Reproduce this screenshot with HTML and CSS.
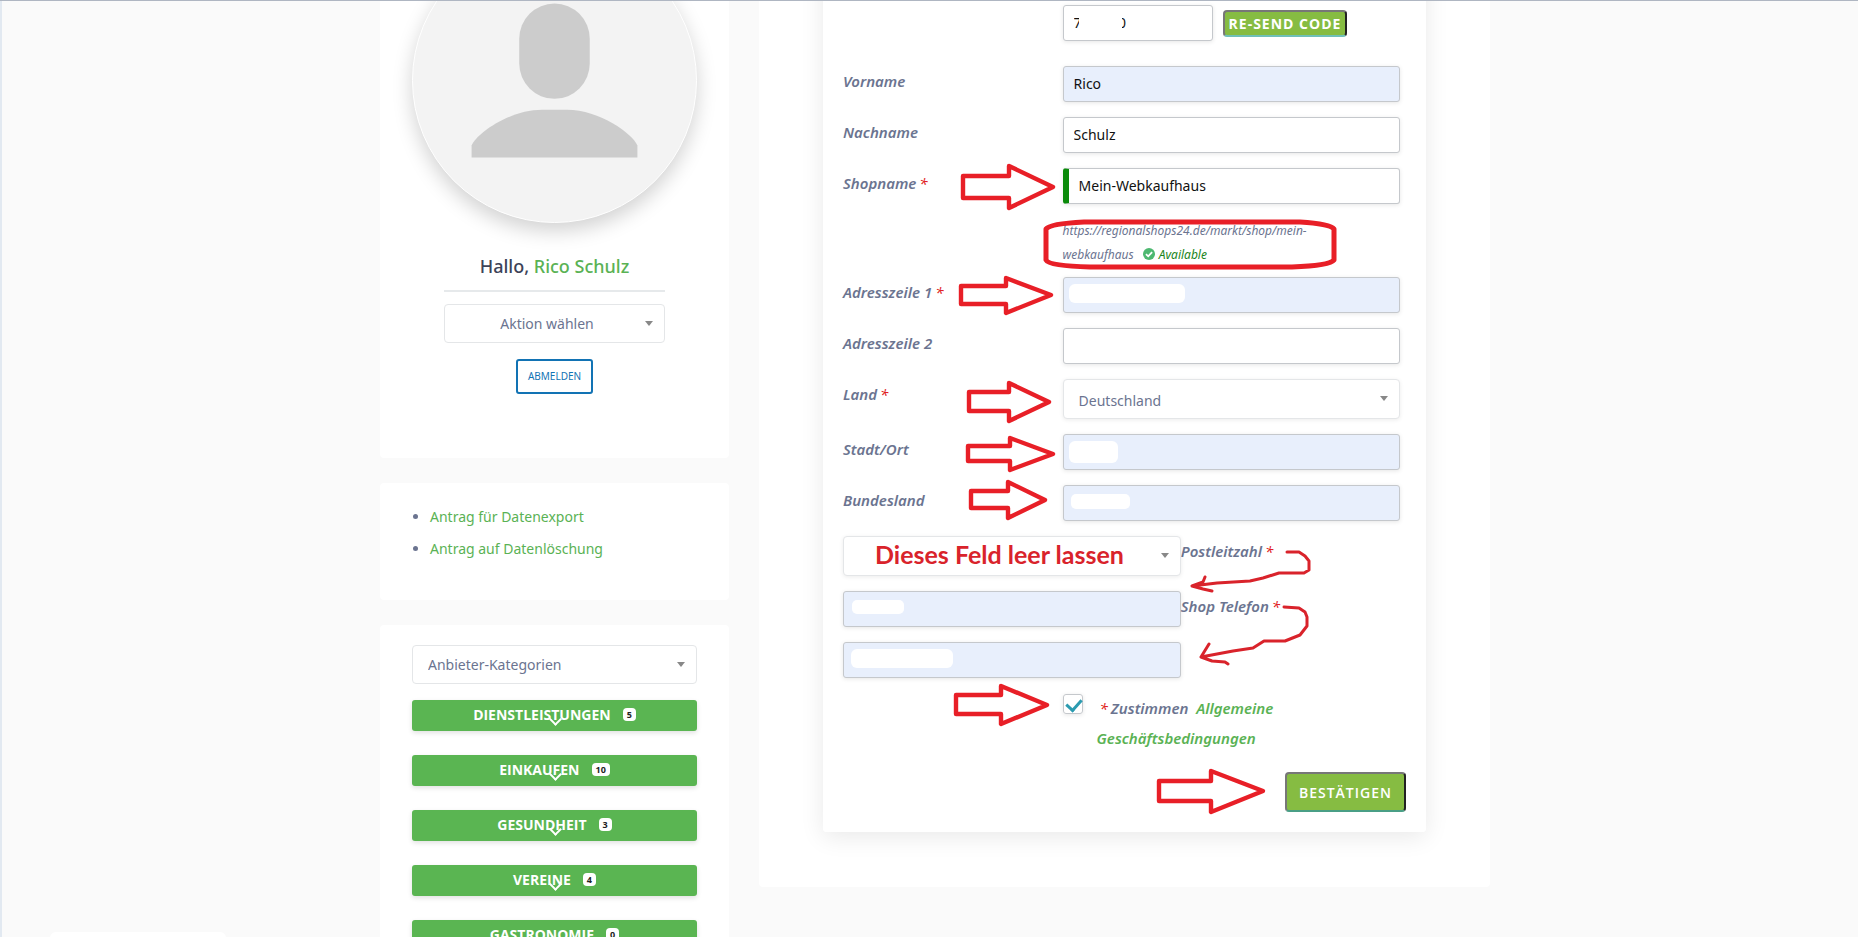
FILE: index.html
```html
<!DOCTYPE html>
<html lang="de">
<head>
    <meta charset="UTF-8">
    <meta name="viewport" content="width=device-width, initial-scale=1.0">
    <title>Anbieter werden</title>
    <link rel="stylesheet" href="styles.css">
</head>
<body>
    <div class="page">
        <aside class="sidebar">
            <section class="card profile">
                <div class="avatar">
                    <svg viewBox="0 0 285 285" aria-hidden="true">
                        <rect x="107" y="65" width="71" height="96" rx="35.5" fill="#ccc"/>
                        <path d="M59 220V208C64 196 97 172 130 172H155C188 172 221 196 226 208V220Z" fill="#ccc"/>
                    </svg>
                </div>
                <div class="profile-body">
                    <h2>Hallo, <a href="#">Rico Schulz</a></h2>
                    <div class="select-wrap">
                        <select class="action" aria-label="Aktion">
                            <option>Aktion wählen</option>
                        </select>
                    </div>
                    <a class="logout" href="#">ABMELDEN</a>
                </div>
            </section>

            <section class="card privacy">
                <ul>
                    <li><a href="#">Antrag für Datenexport</a></li>
                    <li><a href="#">Antrag auf Datenlöschung</a></li>
                </ul>
            </section>

            <section class="card categories">
                <div class="select-wrap">
                    <select aria-label="Kategorien">
                        <option>Anbieter-Kategorien</option>
                    </select>
                </div>
                <button type="button" class="category">DIENSTLEISTUNGEN <span class="badge">5</span></button>
                <button type="button" class="category">EINKAUFEN <span class="badge">10</span></button>
                <button type="button" class="category">GESUNDHEIT <span class="badge">3</span></button>
                <button type="button" class="category">VEREINE <span class="badge">4</span></button>
                <button type="button" class="category">GASTRONOMIE <span class="badge">0</span></button>
            </section>
        </aside>

        <main class="card content">
            <form class="vendor-form">
                <div class="row code-row">
                    <div class="field code">
                        <input type="text" aria-label="Code" value="7&nbsp;&nbsp;&nbsp;&nbsp;&nbsp;&nbsp;&nbsp;&nbsp;&nbsp;&nbsp;0">
                        <button type="button" class="btn resend">RE-SEND CODE</button>
                    </div>
                </div>
                <div class="row">
                    <label for="vorname">Vorname</label>
                    <input class="field filled" type="text" id="vorname" value="Rico">
                </div>
                <div class="row">
                    <label for="nachname">Nachname</label>
                    <input class="field" type="text" id="nachname" value="Schulz">
                </div>
                <div class="row">
                    <label for="shopname">Shopname<span class="req">*</span></label>
                    <input class="field valid" type="text" id="shopname" value="Mein-Webkaufhaus">
                </div>
                <div class="row hint-row">
                    <p class="field hint">https://regionalshops24.de/markt/shop/mein-webkaufhaus
                        <span class="available"><svg viewBox="0 0 12 12" aria-hidden="true"><circle cx="6" cy="6" r="6" fill="#4db870"/><path d="M3 6.2L5.2 8.3L9.1 4.1" fill="none" stroke="#fff" stroke-width="1.8"/></svg>Available</span>
                    </p>
                </div>
                <div class="row">
                    <label for="adresse1">Adresszeile 1<span class="req">*</span></label>
                    <input class="field filled" type="text" id="adresse1">
                </div>
                <div class="row">
                    <label for="adresse2">Adresszeile 2</label>
                    <input class="field" type="text" id="adresse2">
                </div>
                <div class="row">
                    <label for="land">Land<span class="req">*</span></label>
                    <div class="field select-wrap">
                        <select id="land">
                            <option>Deutschland</option>
                        </select>
                    </div>
                </div>
                <div class="row">
                    <label for="ort">Stadt/Ort</label>
                    <input class="field filled" type="text" id="ort">
                </div>
                <div class="row">
                    <label for="bundesland">Bundesland</label>
                    <input class="field filled" type="text" id="bundesland">
                </div>
                <div class="row flipped">
                    <div class="select-wrap">
                        <select aria-label="Region">
                            <option></option>
                        </select>
                    </div>
                    <label for="plz">Postleitzahl<span class="req">*</span></label>
                </div>
                <div class="row flipped">
                    <input class="filled" type="text" id="plz">
                    <label for="telefon">Shop Telefon<span class="req">*</span></label>
                </div>
                <div class="row flipped">
                    <input class="filled" type="text" id="telefon">
                </div>
                <div class="row">
                    <div class="field agree">
                        <input type="checkbox" id="agb" checked>
                        <label for="agb"><span class="req">*</span>Zustimmen&nbsp; <a href="#">Allgemeine Geschäftsbedingungen</a></label>
                    </div>
                </div>
                <div class="actions">
                    <button type="submit" class="btn">BESTÄTIGEN</button>
                </div>

                <svg class="notes" viewBox="823 -30 603 862">
                    <g fill="#fff">
                        <rect x="1079" y="14" width="43" height="18"/>
                        <rect x="1069" y="284" width="116" height="19" rx="6"/>
                        <rect x="1069" y="441" width="49" height="22" rx="6"/>
                        <rect x="1071" y="494" width="59" height="15" rx="5"/>
                        <rect x="852" y="600" width="52" height="14" rx="5"/>
                        <rect x="851" y="649" width="102" height="19" rx="6"/>
                    </g>
                    <g fill="none" stroke="#e81f27" stroke-width="4.4" stroke-linejoin="round" stroke-linecap="round">
                        <path d="M963 176H1009V166L1053 187L1009 208V198H963Z"/>
                        <path d="M961 286H1006V278L1051 295L1006 313V304H961Z"/>
                        <path d="M969 392H1009V383L1049 402L1009 421V411H969Z"/>
                        <path d="M968 446H1010V438L1053 454L1010 470V461H968Z"/>
                        <path d="M971 491H1008V482L1045 500L1008 518V508H971Z"/>
                        <path d="M956 695H1001V686L1047 705L1001 724V714H956Z"/>
                        <path d="M1159 781H1211V771L1263 791L1211 812V801H1159Z"/>
                        <path stroke-width="5" d="M1046 229V260C1048 264 1063 266 1090 267H1292C1318 266 1331 264 1334 260V229C1331 225 1316 223 1300 222H1084C1063 223 1049 225 1046 229Z"/>
                    </g>
                    <g fill="none" stroke="#d9232b" stroke-width="3" stroke-linejoin="round" stroke-linecap="round">
                        <path d="M1287 552H1299L1305 556L1309 561V570L1304 573H1279L1263 578L1250 581L1217 583L1192 586M1205 577L1203 582L1192 586L1203 589L1212 591"/>
                        <path d="M1284 607L1299 608L1305 612L1307 617V626L1300 635L1285 641H1264L1253 648L1233 651L1201 657M1209 644L1201 657L1212 661L1225 662L1228 664"/>
                    </g>
                    <text class="note-text" x="875" y="564">Dieses Feld leer lassen</text>
                </svg>
            </form>
        </main>
    </div>
    <div class="toast"></div>
</body>
</html>
```
FILE: styles.css
```css
* {
    margin: 0;
    padding: 0;
    box-sizing: border-box;
}

body {
    font-family: 'Noto Sans', 'Open Sans', sans-serif;
    font-size: 14px;
    color: #6b7490;
    background: #fafafa;
    height: 100vh;
    overflow: hidden;
    padding-left: 10px;
    border-left: 2px solid #e2e9f1;
}

body::before {
    content: '';
    position: fixed;
    top: 0;
    left: 0;
    right: 0;
    height: 1px;
    background: #afb6c2;
    z-index: 5;
}

a {
    color: #5ab254;
    text-decoration: none;
}

/* page is scrolled down a bit */
.page {
    max-width: 1110px;
    margin: -94px auto 0;
    display: grid;
    grid-template-columns: 349px 1fr;
    gap: 30px;
    align-items: start;
}

.sidebar {
    display: flex;
    flex-direction: column;
    gap: 25px;
}

.card {
    background: #fff;
    border-radius: 4px;
}

/* Sidebar */
.profile {
    padding: 32px 32px 64px;
    text-align: center;
}

.avatar {
    border-radius: 50%;
    background: #f3f3f3;
    border: 1px solid #fff;
    box-shadow: 0 8px 20px rgba(0, 0, 0, 0.18);
    overflow: hidden;
}

.avatar svg {
    display: block;
    width: 100%;
}

.profile-body {
    padding: 23px 32px 0;
}

h2 {
    font-size: 18px;
    font-weight: 500;
    line-height: 40px;
    color: #3d4358;
    padding-bottom: 4px;
    margin-bottom: 12px;
    border-bottom: 2px solid #e6e9eb;
}

.select-wrap {
    position: relative;
}

.select-wrap::after {
    content: '';
    position: absolute;
    right: 12px;
    top: 17px;
    border: 4px solid transparent;
    border-top: 5px solid #888;
    border-bottom: 0;
    pointer-events: none;
}

select {
    display: block;
    width: 100%;
    height: 39px;
    padding: 0 15px;
    appearance: none;
    font: inherit;
    color: #6b7490;
    background: #fff;
    border: 1px solid #e4e6e8;
    border-radius: 4px;
}

select.action {
    padding-right: 30px;
    text-align: center;
    text-align-last: center;
}

.logout {
    display: inline-block;
    margin-top: 16px;
    padding: 0 10px;
    border: 2px solid #1273b4;
    border-radius: 3px;
    font-size: 10px;
    line-height: 31px;
    color: #1273b4;
}

.privacy {
    padding: 18px 32px 35px;
}

.privacy ul {
    padding-left: 18px;
    line-height: 32px;
}

.categories {
    padding: 20px 32px;
}

.category {
    display: flex;
    justify-content: center;
    align-items: center;
    gap: 12px;
    position: relative;
    width: 100%;
    height: 31px;
    margin-bottom: 24px;
    padding-bottom: 2px;
    border: 0;
    border-radius: 3px;
    background: #5ab552;
    box-shadow: 0 2px 5px rgba(0, 0, 0, 0.12);
    color: #fff;
    font: bold 14px 'Open Sans', sans-serif;
}

.categories .select-wrap {
    margin-bottom: 16px;
}

.category::after {
    content: '';
    position: absolute;
    left: 50%;
    top: 15px;
    width: 7px;
    height: 7px;
    margin-left: -4px;
    border: solid #fff;
    border-width: 0 2px 2px 0;
    transform: rotate(45deg);
}

.badge {
    padding: 0 4px;
    border-radius: 4px;
    background: #fff;
    color: #222;
    font-size: 9px;
    line-height: 13px;
}

/* Vendor form */
.content {
    padding: 64px 64px 55px;
}

.vendor-form {
    position: relative;
    padding: 35px 20px 20px;
    background: #fff;
    border-radius: 3px;
    box-shadow: 0 5px 25px rgba(0, 0, 0, 0.09);
}

.row {
    display: grid;
    grid-template-columns: 39fr 60fr 1fr;
    align-items: start;
    margin-bottom: 15px;
}

.row .field {
    grid-column: 2;
}

.row.flipped {
    grid-template-columns: 60fr 40fr;
}

.code-row {
    margin-bottom: 25px;
}

.hint-row {
    margin-bottom: 10px;
}

label {
    font-size: 15px;
    font-weight: 600;
    font-style: italic;
    line-height: 30px;
}

.req {
    margin: 0 3px;
    color: #e02020;
    font-weight: 400;
}

input[type="text"] {
    width: 100%;
    height: 36px;
    padding: 0 10px 2px;
    font: inherit;
    color: #111;
    background: #fff;
    border: 1px solid #c5c8cc;
    border-radius: 3px;
    box-shadow: 0 1px 4px rgba(0, 0, 0, 0.1);
}

input[type="text"].filled {
    background: #e8effc;
}

input[type="text"].valid {
    border-left: 6px solid #0a8a0a;
}

.code {
    display: flex;
    align-items: center;
    gap: 10px;
}

.code input[type="text"] {
    width: 150px;
}

.vendor-form select {
    height: 40px;
    padding-top: 2px;
    box-shadow: 0 1px 4px rgba(0, 0, 0, 0.08);
}

.btn {
    height: 40px;
    padding: 0 12px;
    background: #86bc42;
    border: 2px solid;
    border-color: #777 #222 #4a9f86 #777;
    border-radius: 4px;
    color: #fff;
    font: 600 14px 'Open Sans', sans-serif;
    letter-spacing: 1px;
}

.btn.resend {
    height: 27px;
    padding: 0 4px;
    border-bottom-color: #6fc0b8;
    font-weight: 700;
    white-space: nowrap;
}

.hint {
    max-width: 280px;
    font-size: 12px;
    font-style: italic;
    line-height: 24px;
}

.available {
    margin-left: 6px;
    color: #1b851b;
}

.available svg {
    width: 12px;
    height: 12px;
    margin-right: 4px;
    vertical-align: -1px;
}

.agree {
    display: flex;
    align-items: flex-start;
    gap: 14px;
}

.agree label {
    max-width: 220px;
}

.agree input {
    appearance: none;
    flex: none;
    width: 20px;
    height: 20px;
    margin-top: 1px;
    border: 1px solid #c5c8cc;
    border-radius: 3px;
    box-shadow: 0 1px 4px rgba(0, 0, 0, 0.1);
}

.agree input:checked::before {
    content: '';
    display: block;
    width: 7px;
    height: 12px;
    margin: 1px 0 0 5px;
    border: solid #2b9bb0;
    border-width: 0 3px 3px 0;
    transform: rotate(42deg);
}

.actions {
    display: flex;
    justify-content: flex-end;
    margin-top: 19px;
}

.notes {
    position: absolute;
    top: 0;
    left: 0;
    width: 100%;
    height: 100%;
    pointer-events: none;
}

.note-text {
    font: bold 25px Lato, sans-serif;
    fill: #d9232b;
}

.toast {
    position: fixed;
    left: 50px;
    bottom: -35px;
    width: 176px;
    height: 40px;
    border-radius: 6px;
    background: #fff;
}
```
